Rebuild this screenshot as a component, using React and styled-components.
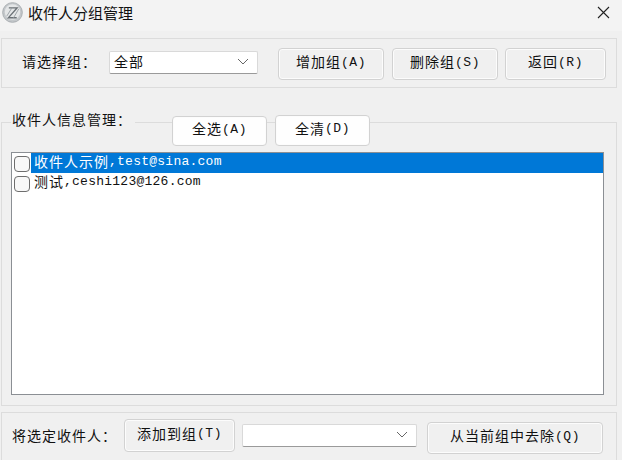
import React from 'react'
import styled, { createGlobalStyle } from 'styled-components'

const Global = createGlobalStyle`
  html, body { margin: 0; padding: 0; background: #f0f0f0; }
  body { width: 622px; height: 460px; overflow: hidden; }
  * { box-sizing: border-box; }
`

const Window = styled.div`
  width: 622px;
  height: 460px;
  display: flex;
  flex-direction: column;
  background: #f0f0f0;
  font-family: "Liberation Mono", "Noto Sans CJK SC", monospace;
  font-size: 14px;
  color: #111;
  overflow: hidden;
`

const TitleBar = styled.div`
  height: 31px;
  flex: none;
  display: flex;
  align-items: center;
  padding: 0 12px 7px 2px;
  background: #f3f3f3;
`

const AppTitle = styled.div`
  margin-left: 5px;
  flex: 1;
  font-family: "Noto Sans CJK SC", sans-serif;
  font-size: 15px;
  line-height: 15px;
  color: #111;
`

const Panel = styled.div`
  width: 616px;
  height: ${p => p.$h}px;
  margin-top: ${p => p.$mt}px;
  flex: none;
  margin-left: 1px;
  border: 1px solid #dcdcdc;
  padding: ${p => p.$pad};
`

const Row = styled.div`
  display: flex;
  align-items: flex-start;
`

const Label = styled.span`
  font-family: "Noto Sans CJK SC", sans-serif;
  font-size: 14px;
  line-height: 14px;
  letter-spacing: 1px;
  white-space: nowrap;
  width: ${p => p.$w}px;
  margin-top: ${p => p.$mt || 0}px;
  flex: none;
`

const Combo = styled.div`
  width: ${p => p.$w}px;
  height: 23px;
  flex: none;
  margin-left: ${p => p.$ml || 0}px;
  margin-top: ${p => p.$mt || 0}px;
  display: flex;
  align-items: center;
  justify-content: space-between;
  padding: 0 8px 3px 4px;
  background: #fff;
  border: 1px solid #d9d9d9;
  border-bottom-color: #9a9a9a;
  border-radius: 2px;
  font-family: "Noto Sans CJK SC", sans-serif;
  font-size: 14px;
  line-height: 14px;
  letter-spacing: 1px;
`

const Button = styled.div`
  width: ${p => p.$w}px;
  height: ${p => p.$h || 32}px;
  flex: none;
  margin-left: ${p => p.$ml || 0}px;
  margin-top: ${p => p.$mt || 0}px;
  display: flex;
  align-items: center;
  justify-content: center;
  padding-bottom: 6px;
  background: ${p => p.$light ? '#fefefe' : '#f0f0f0'};
  border: 1px solid #d2d2d2;
  box-shadow: inset 0 0 0 1px #fcfcfc;
  border-radius: 4px;
  font-size: 14px;
  line-height: 14px;
  white-space: nowrap;
`

const Han = styled.span`
  font-family: "Noto Sans CJK SC", sans-serif;
  letter-spacing: 1px;
`

const Key = styled.span`
  font-family: "Liberation Mono", monospace;
  font-size: 13px;
  letter-spacing: 0.6px;
  padding-top: 3px;
`

// legend row sits across the top border of the panel
const LegendRow = styled.div`
  height: 30px;
  margin-top: -8px;
  padding-left: 9px;
  display: flex;
  align-items: flex-start;
`

const Legend = styled.span`
  font-family: "Noto Sans CJK SC", sans-serif;
  font-size: 14px;
  letter-spacing: 1px;
  background: #f0f0f0;
  padding: 0 2px 0 1px;
  width: 124px;
  line-height: 16px;
  margin-top: -4px;
  flex: none;
`

const List = styled.div`
  width: 593px;
  height: 243px;
  margin: 7px 0 0 9px;
  background: #fff;
  border: 1px solid #8b8f94;
  padding: 0 0 0 2px;
`

const Item = styled.div`
  height: 20px;
  display: flex;
  align-items: center;
`

const Check = styled.span`
  width: 16px;
  height: 16px;
  flex: none;
  margin-top: 2px;
  background: #f8f8f8;
  border: 1px solid #6e6e6e;
  border-radius: 4px;
`

const ItemText = styled.div`
  flex: 1;
  height: 20px;
  margin-left: 1px;
  padding: 0 0 5px 3px;
  line-height: 14px;
  display: flex;
  align-items: center;
  white-space: nowrap;
  background: ${p => p.$selected ? '#0078d7' : 'transparent'};
  color: ${p => p.$selected ? '#fff' : '#111'};
`

const Mail = styled.span`
  font-family: "Liberation Mono", monospace;
  font-size: 13px;
  letter-spacing: 0.25px;
  padding-top: 2px;
`

function Chevron() {
  return (
    <svg width="12" height="7" viewBox="0 0 12 7" fill="none">
      <path d="M1 1l5 5 5-5" stroke="#666" strokeWidth="1" />
    </svg>
  )
}

function Logo() {
  return (
    <svg width="21" height="21" viewBox="0 0 20 20" fill="none">
      <circle cx="10" cy="10" r="9.4" fill="#c3c7ca" stroke="#a4a9ad" strokeWidth="0.8" />
      <circle cx="10" cy="9.6" r="7.4" fill="#e4e6e7" />
      <path d="M6.5 5.5h8L6 15h8" stroke="#6b7176" strokeWidth="1.2" />
      <path d="M9.5 5.5L4.5 13.5M16 6.5l-5 8.5" stroke="#9aa0a5" strokeWidth="0.9" />
    </svg>
  )
}

function Close() {
  return (
    <svg width="13" height="13" viewBox="0 0 13 13" fill="none">
      <path d="M1 1l11 11M12 1L1 12" stroke="#222" strokeWidth="1.1" />
    </svg>
  )
}

function Btn({ han, k, ...rest }) {
  return (
    <Button {...rest}>
      <Han>{han}</Han><Key>({k})</Key>
    </Button>
  )
}

export default function App() {
  return (
    <Window>
      <Global />
      <TitleBar>
        <Logo />
        <AppTitle>收件人分组管理</AppTitle>
        <Close />
      </TitleBar>

      <Panel $h={50} $mt={7} $pad="9px 0 0 20px">
        <Row>
          <Label $w={87} $mt={6}>请选择组：</Label>
          <Combo $w={149} $mt={3}>全部<Chevron /></Combo>
          <Btn $w={106} $ml={20} han="增加组" k="A" />
          <Btn $w={106} $ml={8} han="删除组" k="S" />
          <Btn $w={101} $ml={7} han="返回" k="R" />
        </Row>
      </Panel>

      <Panel $h={284} $mt={34} $pad="0">
        <LegendRow>
          <Legend>收件人信息管理：</Legend>
          <Btn $w={95} $h={30} $ml={37} $mt={1} $light han="全选" k="A" />
          <Btn $w={95} $h={31} $ml={8} $light han="全清" k="D" />
        </LegendRow>
        <List>
          <Item>
            <Check />
            <ItemText $selected>
              <Han>收件人示例</Han><Mail>,test@sina.com</Mail>
            </ItemText>
          </Item>
          <Item>
            <Check />
            <ItemText>
              <Han>测试</Han><Mail>,ceshi123@126.com</Mail>
            </ItemText>
          </Item>
        </List>
      </Panel>

      <Panel $h={50} $mt={6} $pad="6px 0 0 10px">
        <Row>
          <Label $w={112} $mt={9}>将选定收件人：</Label>
          <Btn $w={111} $h={33} han="添加到组" k="T" />
          <Combo $w={175} $ml={7} $mt={5}><span /><Chevron /></Combo>
          <Btn $w={176} $h={32} $ml={10} $mt={3} han="从当前组中去除" k="Q" />
        </Row>
      </Panel>
    </Window>
  )
}
